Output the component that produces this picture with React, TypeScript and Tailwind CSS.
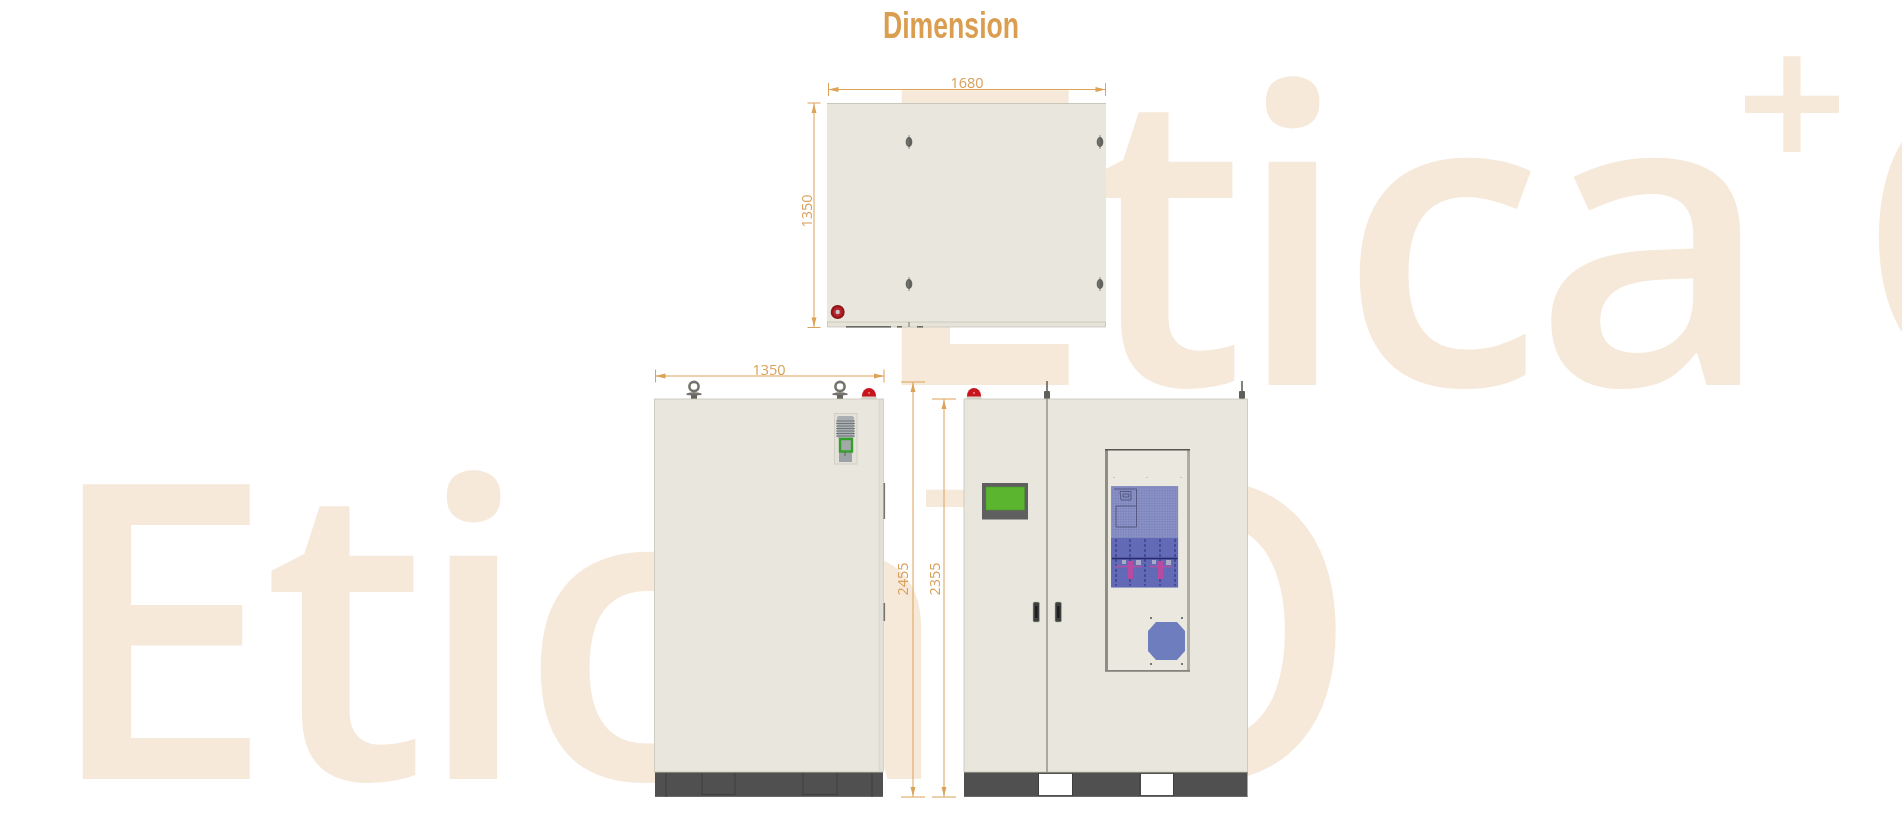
import React from 'react';

const line = '#dca257';
const panel = '#e9e6dd';
const edge = '#c6c4b8';

const Watermark = ({ className }: { className: string }) => (
  <div className={`absolute whitespace-nowrap font-['Open_Sans',sans-serif] text-[413px] font-semibold leading-none tracking-[-11px] text-[#f6e9d9] ${className}`}>
    Etica
    <span className="relative top-[-211px] ml-[-26px] mr-[6px] text-[197px] leading-none tracking-normal">+</span>
    O
  </div>
);

const HDim = ({ x1, x2, y, label, tx }: { x1: number; x2: number; y: number; label: string; tx: number }) => (
  <g>
    <path d={`M${x1} ${y}H${x2}M${x1} ${y - 6.5}v13M${x2} ${y - 6.5}v13`} stroke={line} strokeWidth="1" />
    <path d={`M${x1} ${y}l10 -2.5v5zM${x2} ${y}l-10 -2.5v5z`} fill={line} />
    <text x={tx} y={y - 1.5} textAnchor="middle" fontSize="14.5" fill="#d9a05a" fontFamily="'Open Sans', sans-serif">
      {label}
    </text>
  </g>
);

const VDim = ({ x, y1, y2, tick, label, tx, ty }: { x: number; y1: number; y2: number; tick: number; label: string; tx: number; ty: number }) => (
  <g>
    <path d={`M${x} ${y1}V${y2}M${x - tick} ${y1}h${tick * 2}M${x - tick} ${y2}h${tick * 2}`} stroke={line} strokeWidth="1" />
    <path d={`M${x} ${y1 + 1}l-2.5 9h5zM${x} ${y2 - 1}l-2.5 -9h5z`} fill={line} />
    <text
      transform={`translate(${tx} ${ty}) rotate(-90)`}
      textAnchor="middle"
      fontSize="14.5"
      fill="#d9a05a"
      fontFamily="'Open Sans', sans-serif"
    >
      {label}
    </text>
  </g>
);

const Bolt = ({ x, y }: { x: number; y: number }) => (
  <g>
    <path d={`M${x} ${y - 7}V${y + 7}`} stroke="#8a8a82" strokeWidth="1" />
    <ellipse cx={x} cy={y} rx="3.3" ry="5" fill="#63635d" />
    <path d={`M${x - 1} ${y - 3.5}v7`} stroke="#85857e" strokeWidth=".8" />
  </g>
);

const Dome = ({ x }: { x: number }) => (
  <g>
    <path d={`M${x - 7} 397.5v-1.5a7 8 0 0 1 14 0v1.5z`} fill="#c8141c" />
    <circle cx={x} cy="393" r="1" fill="#ee8a8a" />
    <rect x={x - 7.5} y="396.5" width="15" height="2.5" fill="#d8d6cc" />
  </g>
);

const EyeBolt = ({ x }: { x: number }) => (
  <g>
    <circle cx={x} cy="386.5" r="4.6" fill="none" stroke="#74746d" strokeWidth="2.6" />
    <path d={`M${x - 7.5} 393.5q7.5 -2.5 15 0v1.5q-4.5 0 -5 1h-5q-.5 -1 -5 -1z`} fill="#74746d" />
    <rect x={x - 3} y="395" width="6" height="4" fill="#66665f" />
  </g>
);

const Antenna = ({ x }: { x: number }) => (
  <g>
    <path d={`M${x} 381V392`} stroke="#74746e" strokeWidth="1.8" />
    <rect x={x - 3} y="391" width="6" height="8" rx="1" fill="#5f5f5a" />
  </g>
);

const Handle = ({ x }: { x: number }) => (
  <g>
    <rect x={x - 3} y="602" width="6.5" height="20" rx="1.5" fill="#3c3f3e" stroke="#b9b7ad" strokeWidth=".6" />
    <rect x={x - 1} y="606" width="2.5" height="12" fill="#1d1f1f" />
  </g>
);

const range = (from: number, to: number, step: number) => {
  const out: number[] = [];
  for (let v = from; v <= to; v += step) out.push(v);
  return out;
};

const Drawing = () => (
  <svg width="620" height="740" viewBox="641 70 620 740" className="mt-[23px] shrink-0 blur-[0.35px]">
    {/* top view */}
    <HDim x1={828.5} x2={1105.5} y={89.5} label="1680" tx={967} />
    <VDim x={814} y1={103} y2={327.5} tick={6.5} label="1350" tx={812} ty={211} />
    <rect x="827" y="103" width="279" height="224" fill={panel} />
    <rect x="827" y="103" width="279" height="1" fill="#c9c7bc" />
    <rect x="827.5" y="322" width="278" height="5" fill="#e6e3d9" stroke={edge} strokeWidth=".8" />
    <path d="M909 322v5" stroke="#77776f" strokeWidth="1" />
    <rect x="846" y="326" width="45" height="1.6" fill="#6c6c66" />
    <rect x="897" y="326" width="5" height="1.6" fill="#6c6c66" />
    <rect x="917" y="326" width="6" height="1.6" fill="#6c6c66" />
    <Bolt x={909} y={142} />
    <Bolt x={1100} y={142} />
    <Bolt x={909} y={284} />
    <Bolt x={1100} y={284} />
    <circle cx="837.7" cy="312" r="7" fill="#8d1418" />
    <circle cx="837.7" cy="312" r="5" fill="#b5222a" />
    <circle cx="837.7" cy="312" r="2.2" fill="#c9c3c3" />

    {/* side view */}
    <HDim x1={655.5} x2={884} y={376} label="1350" tx={769} />
    <EyeBolt x={694} />
    <EyeBolt x={840} />
    <Dome x={869} />
    <rect x="654.5" y="399" width="229" height="373" fill={panel} stroke={edge} strokeWidth=".8" />
    <rect x="879" y="399.5" width="4.6" height="372" fill="#e1dfd6" stroke="#cfcdc3" strokeWidth=".5" />
    <rect x="883.5" y="483" width="1.6" height="36" fill="#77776f" />
    <rect x="883.5" y="603" width="1.6" height="18" fill="#77776f" />
    <rect x="834.5" y="413.5" width="22.5" height="50.5" fill="#e4e2d8" stroke="#d2d0c6" strokeWidth="1" />
    <rect x="837" y="416" width="17" height="22" rx="2" fill="#aab0b2" />
    {range(421, 437, 2.5).map((y) => (
      <path key={y} d={`M836 ${y}h19`} stroke="#5f666a" strokeWidth=".8" />
    ))}
    <rect x="839" y="452" width="13" height="10" fill="#9ca3a6" />
    <rect x="840" y="439" width="12" height="12.5" fill="#a3a8a8" stroke="#34a02c" strokeWidth="2.4" />
    <path d="M845 452v4" stroke="#5d6365" strokeWidth="1" />
    <rect x="655" y="772" width="228" height="25" rx="1" fill="#505050" />
    <path d="M655 772.5H883" stroke="#85857e" strokeWidth="1" />
    <path d="M655 796.5H883" stroke="#6a6a66" strokeWidth="1" />
    <path d="M666 773V797M872 773V797M702 773V795M735 773V795M803 773V795M837 773V795M702 794.5H735M803 794.5H837" stroke="#3e3e3e" strokeWidth="1" />

    {/* height dimensions */}
    <VDim x={913} y1={382} y2={797} tick={12} label="2455" tx={908} ty={579} />
    <VDim x={944} y1={399} y2={797} tick={12} label="2355" tx={940} ty={579} />

    {/* front view */}
    <Dome x={974} />
    <Antenna x={1047} />
    <Antenna x={1242} />
    <rect x="964" y="399" width="283.5" height="373" fill={panel} stroke={edge} strokeWidth=".8" />
    <rect x="1046" y="399" width="2" height="373" fill="#a9a79e" />
    <rect x="982" y="483" width="46" height="36.5" fill="#5f5f5f" />
    <rect x="986" y="487" width="38.5" height="23" fill="#5bb52f" stroke="#4b9a2a" strokeWidth=".6" />
    <Handle x={1036} />
    <Handle x={1058} />

    <rect x="1105.5" y="449.5" width="84.5" height="221.5" fill="#ebe8df" />
    <rect x="1105" y="449" width="3" height="222" fill="#8f8e86" />
    <rect x="1187" y="449" width="3" height="222" fill="#aeaca3" />
    <rect x="1105" y="449" width="85" height="1.5" fill="#55554f" />
    <rect x="1105" y="670" width="85" height="1.8" fill="#85847c" />
    {[1114, 1147, 1181].map((x) => (
      <rect key={x} x={x - 0.5} y="477" width="1" height="1" fill="#a6a49a" />
    ))}

    {/* filter panel */}
    <rect x="1111" y="486" width="67" height="52" fill="#8d95c7" />
    <rect x="1111" y="538" width="67" height="49.5" fill="#656dbb" />
    {range(1113, 1178, 2.6).map((x) => (
      <path key={x} d={`M${x} 486V587.5`} stroke="#5a60a6" strokeOpacity=".35" strokeWidth=".6" />
    ))}
    {range(488, 587, 2.6).map((y) => (
      <path key={y} d={`M1111 ${y}H1178`} stroke="#5a60a6" strokeOpacity=".35" strokeWidth=".6" />
    ))}
    <path d="M1114 489H1136.5V527H1116V506H1136.5M1120 491.5H1131V500H1121zM1123 494H1129V497H1123z" fill="none" stroke="#4a4d74" strokeWidth=".8" />
    <path d="M1112 558.5H1177.5" stroke="#262a6a" strokeWidth="1.4" />
    <path d="M1130 539V586M1145 539V586M1160 539V586M1116 539V586M1175 539V586" stroke="#2c3070" strokeOpacity=".65" strokeWidth="1.5" strokeDasharray="3 2" />
    <path d="M1115 566.5H1142M1150 566.5H1172" stroke="#b2509f" strokeWidth="1.4" />
    <rect x="1128" y="561" width="5" height="18" fill="#b84aa2" />
    <rect x="1158" y="561" width="5" height="18" fill="#b84aa2" />
    <rect x="1122" y="560" width="4" height="4" fill="#a9a9c9" />
    <rect x="1136" y="560" width="5" height="5" fill="#a9a9c9" />
    <rect x="1152" y="560" width="4" height="4" fill="#a9a9c9" />
    <rect x="1166" y="560" width="5" height="5" fill="#a9a9c9" />

    {/* fan */}
    <path d="M1156 622H1177L1185 631V651L1177 660H1156L1148 651V631z" fill="#6d7dbd" />
    {[[1151, 618], [1182, 618], [1151, 664], [1182, 664]].map(([x, y]) => (
      <rect key={`${x}-${y}`} x={x - 1} y={y - 1} width="2" height="2" fill="#77776f" />
    ))}

    {/* base */}
    <rect x="964" y="772" width="283.5" height="25" fill="#505050" />
    <path d="M964 772.5H1247.5" stroke="#85857e" strokeWidth="1" />
    <path d="M964 796.5H1247.5" stroke="#6a6a66" strokeWidth="1" />
    <rect x="1039" y="774" width="33" height="21" fill="#ffffff" />
    <rect x="1141" y="774" width="32" height="21" fill="#ffffff" />
    <path d="M1038.5 773V796M1072.5 773V796M1140 773V796M1173.5 773V796" stroke="#3e3e3e" strokeWidth="1" />
  </svg>
);

const App: React.FC = () => {
  return (
    <div className="relative h-[829px] w-full overflow-hidden bg-white">
      <Watermark className="left-[44px] top-[413px]" />
      <Watermark className="left-[863px] top-[19px]" />
      <div className="relative flex flex-col items-center">
        <h1 className="mt-[4px] h-[43px] origin-center scale-x-[0.74] font-['Liberation_Sans_Narrow','Liberation_Sans',sans-serif] text-[36px] font-bold leading-[43px] text-[#db9e50]">
          Dimension
        </h1>
        <Drawing />
      </div>
    </div>
  );
};

export default App;
